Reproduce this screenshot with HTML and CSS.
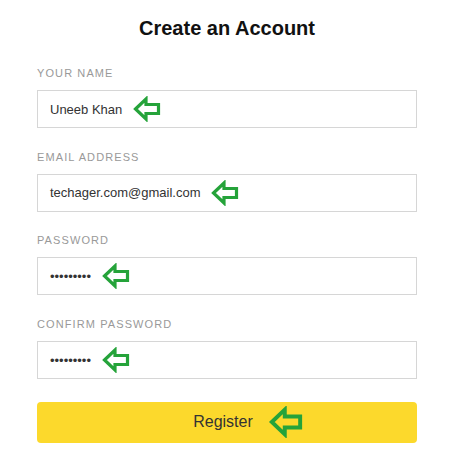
FILE: index.html
```html
<!DOCTYPE html>
<html>
<head>
<meta charset="utf-8">
<link rel="stylesheet" href="styles.css">
</head>
<body>
<div class="form">
  <h1 class="title">Create an Account</h1>
  <div class="field">
    <div class="label">YOUR NAME</div>
    <div class="input"><span class="value">Uneeb Khan</span><svg class="arrow" viewBox="0 0 28 26"><polygon points="2.5,13 13,3 13,8.5 25.5,8.5 25.5,17.5 13,17.5 13,23"/></svg></div>
  </div>
  <div class="field">
    <div class="label">EMAIL ADDRESS</div>
    <div class="input"><span class="value">techager.com@gmail.com</span><svg class="arrow" viewBox="0 0 28 26"><polygon points="2.5,13 13,3 13,8.5 25.5,8.5 25.5,17.5 13,17.5 13,23"/></svg></div>
  </div>
  <div class="field">
    <div class="label">PASSWORD</div>
    <div class="input"><span class="value dots">•••••••••</span><svg class="arrow" viewBox="0 0 28 26"><polygon points="2.5,13 13,3 13,8.5 25.5,8.5 25.5,17.5 13,17.5 13,23"/></svg></div>
  </div>
  <div class="field">
    <div class="label">CONFIRM PASSWORD</div>
    <div class="input"><span class="value dots">•••••••••</span><svg class="arrow" viewBox="0 0 28 26"><polygon points="2.5,13 13,3 13,8.5 25.5,8.5 25.5,17.5 13,17.5 13,23"/></svg></div>
  </div>
  <div class="button"><span>Register</span><svg class="arrow big" viewBox="0 0 28 26"><polygon points="2.5,13 13,3 13,8.5 25.5,8.5 25.5,17.5 13,17.5 13,23"/></svg></div>
</div>
</body>
</html>
```
FILE: styles.css
```css
html, body {
  margin: 0;
  padding: 0;
  background: #fff;
}
body {
  font-family: "Liberation Sans", Arial, sans-serif;
  color: #333;
}
.form {
  width: 380px;
  margin-left: 37px;
  padding-top: 16px;
}
.title {
  margin: 0 0 27px 0;
  text-align: center;
  font-size: 20px;
  line-height: 24px;
  font-weight: bold;
  color: #111;
}
.field {
  margin-bottom: 22.7px;
}
.label {
  font-size: 11px;
  line-height: 14px;
  letter-spacing: 1.1px;
  color: #999;
  margin-bottom: 10px;
}
.label:first-child {
  margin-top: -1px;
}
.input {
  box-sizing: border-box;
  height: 38px;
  border: 1px solid #d6d6d6;
  display: flex;
  align-items: center;
  padding-left: 12px;
  gap: 11px;
}
.value {
  font-size: 13px;
  color: #333;
}
.dots {
  color: #333;
  letter-spacing: 0;
}
.arrow {
  width: 28px;
  height: 26px;
  fill: none;
  stroke: #25a33a;
  stroke-width: 3.2;
  stroke-linejoin: miter;
}
.arrow.big {
  width: 38px;
  height: 32px;
}
.button {
  margin-top: 3.3px;
  height: 41px;
  background: #fcd92c;
  border-radius: 4px;
  display: flex;
  align-items: center;
  justify-content: center;
  gap: 14px;
  padding-left: 44px;
  box-sizing: border-box;
  font-size: 16px;
  color: #333;
}
```
